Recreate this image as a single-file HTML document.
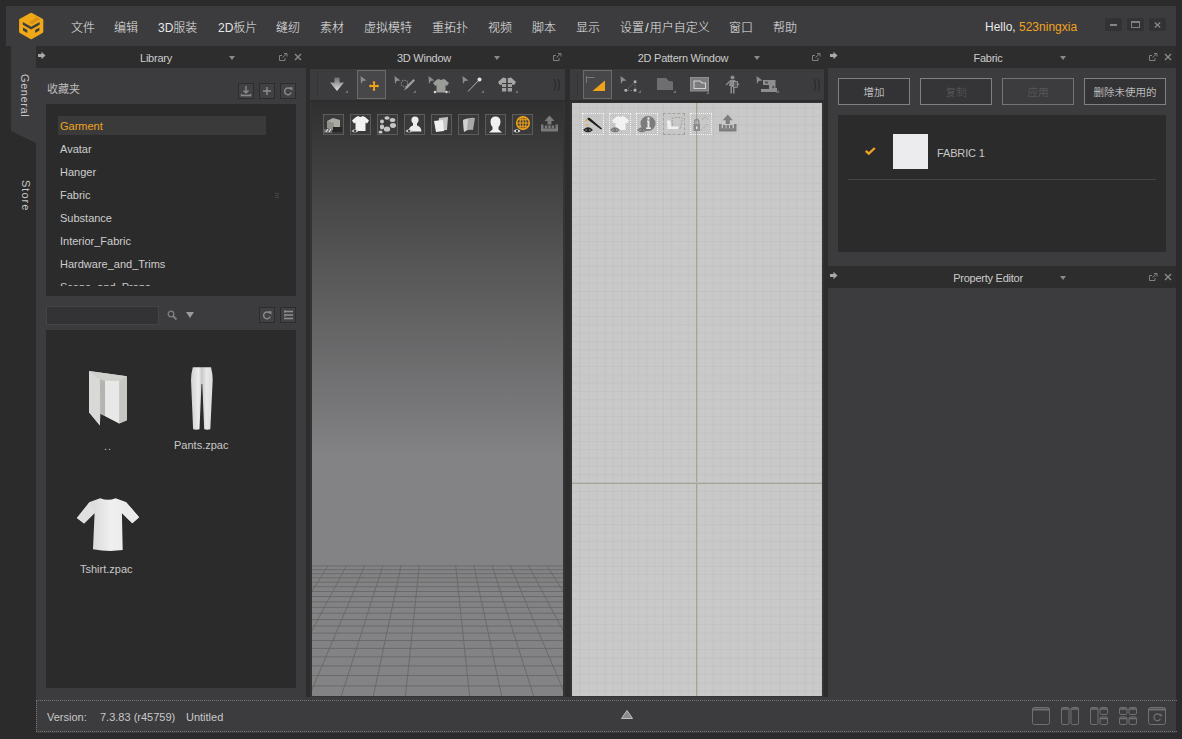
<!DOCTYPE html>
<html lang="zh-CN">
<head>
<meta charset="utf-8">
<title>CLO</title>
<style>
*{box-sizing:border-box;margin:0;padding:0}
html,body{width:1182px;height:739px;overflow:hidden;background:#2b2b2b}
body{position:relative;font-family:"Liberation Sans","Noto Sans CJK SC",sans-serif;font-size:11px;color:#d0d0d0;-webkit-font-smoothing:antialiased}
.abs{position:absolute}
#menubar{left:6px;top:6px;width:1170px;height:40px;background:#3c3c3e}
.mi{position:absolute;top:21px;font-weight:300;height:14px;line-height:14px;font-size:12px;color:#e8e8e8;white-space:nowrap}
.titlebar{position:absolute;height:22px;background:#2d2d2d;color:#d4d4d4;font-size:11px;line-height:22px;text-align:center}
.panel{position:absolute;background:#3c3c3e}
.dark{background:#2b2b2b}
.tri{position:absolute;width:0;height:0;border-left:3px solid transparent;border-right:3px solid transparent;border-top:4px solid #8a8a8a}
.sbtn{position:absolute;width:16px;height:16px;border:1px solid #2c2c2c;background:#414143}
.li{position:absolute;left:60px;height:14px;line-height:14px;font-size:11px;color:#cdcdcd;white-space:nowrap}
.fbtn{position:absolute;top:78px;height:27px;border:1px solid #808080;background:#333335;color:#e4e4e4;font-size:10.5px;font-weight:300;line-height:27px;text-align:center;white-space:nowrap}
.fbtn.dis{background:#3c3c3e;color:#636363;border-color:#747474}
.vtab{position:absolute;transform:rotate(90deg);transform-origin:left top;font-size:11px;letter-spacing:1px;color:#c8c8c8;white-space:nowrap;line-height:12px}
</style>
</head>
<body>
<!-- menu bar -->
<div id="menubar" class="abs"></div>
<svg class="abs" style="left:18px;top:12px" width="27" height="28" viewBox="0 0 27 28">
  <polygon points="13.2,2.300 23.700,8.200 23.700,19.700 13.200,25.600 2.700,19.700 2.700,8.200" fill="#f0a916" stroke="#f0a916" stroke-width="3.200" stroke-linejoin="round"/>
  <polygon points="16,3.500 22.500,7.300 14,12.300 10.500,10.300 18,6" fill="#d9921b"/>
  <polygon points="4.800,10 13.200,14.800 21.600,10 21.600,12.800 13.200,17.600 4.800,12.800" fill="#3c3c3e"/>
  <polygon points="5,15.600 9.300,18 9.300,21 5,18.600" fill="#3c3c3e"/>
  <polygon points="21.400,15.600 17.100,18 17.100,21 21.400,18.600" fill="#3c3c3e"/>
</svg>
<div class="mi" style="left:71px">文件</div>
<div class="mi" style="left:114px">编辑</div>
<div class="mi" style="left:158px">3D服装</div>
<div class="mi" style="left:218px">2D板片</div>
<div class="mi" style="left:276px">缝纫</div>
<div class="mi" style="left:320px">素材</div>
<div class="mi" style="left:364px">虚拟模特</div>
<div class="mi" style="left:432px">重拓扑</div>
<div class="mi" style="left:488px">视频</div>
<div class="mi" style="left:532px">脚本</div>
<div class="mi" style="left:576px">显示</div>
<div class="mi" style="left:620px">设置<span style="padding:0 1.2px">/</span>用户自定义</div>
<div class="mi" style="left:729px">窗口</div>
<div class="mi" style="left:773px">帮助</div>
<div class="mi" style="left:985px;top:20px">Hello, <span style="color:#f0a321">523ningxia</span></div>

<!-- SECTION: window buttons -->
<div class="abs" style="left:1105px;top:18px;width:17px;height:13px;background:#323234;border-radius:2px"><div class="abs" style="left:5px;top:6px;width:7px;height:2px;background:#848484"></div></div>
<div class="abs" style="left:1127px;top:18px;width:17px;height:13px;background:#323234;border-radius:2px"><div class="abs" style="left:4px;top:3px;width:9px;height:7px;border:1px solid #808080;border-top-width:2px"></div></div>
<div class="abs" style="left:1149px;top:18px;width:17px;height:13px;background:#323234;border-radius:2px"><svg class="abs" style="left:5px;top:4px" width="7" height="6" viewBox="0 0 7 6"><path d="M0.800 0.500L6.200 5.500M6.200 0.500L0.800 5.500" stroke="#8a8a8a" stroke-width="1.200"/></svg></div>

<!-- SECTION: left sidebar -->
<svg class="abs" style="left:0;top:46px" width="36" height="110" viewBox="0 0 36 110"><polygon points="11,0 36,0 36,97 11,85" fill="#3c3c3e"/></svg>
<div class="vtab" style="left:31px;top:74px;letter-spacing:0.6px">General</div>
<div class="vtab" style="left:32px;top:180px">Store</div>

<!-- SECTION: library -->
<div class="titlebar" style="left:36px;top:46px;width:1140px"></div>
<div class="panel" style="left:36px;top:68px;width:270px;height:629px"></div>
<div class="abs" style="left:36px;top:46px;width:270px;height:22px;line-height:24px;text-align:center;color:#cccccc;letter-spacing:-0.25px;padding-right:30px">Library</div>
<svg class="abs" style="left:38px;top:51px" width="9" height="9" viewBox="0 0 9 9"><path d="M0 3h3.5V0.8L7.5 4.5 3.5 8.2V6H0z" fill="#a8a8a8"/></svg>
<div class="tri" style="left:229px;top:56px"></div>
<svg class="abs" style="left:279px;top:53px" width="9" height="8" viewBox="0 0 9 8"><path d="M3 2.500H0.500v5h5.500V5M3.500 4.500L7.500 0.800M5 0.500h3v3" fill="none" stroke="#808080" stroke-width="1"/></svg>
<svg class="abs" style="left:294px;top:53px" width="8" height="8" viewBox="0 0 8 8"><path d="M1 1L7 7M7 1L1 7" stroke="#8a8a8a" stroke-width="1.4"/></svg>
<div class="abs" style="left:47px;top:82px;font-size:11px;line-height:14px;color:#bdbdbd">收藏夹</div>
<div class="sbtn" style="left:238px;top:83px"><svg width="14" height="14" viewBox="0 0 14 14"><path d="M7 2v6M4.500 6.500L7 9l2.500-2.500M2.500 10v1.500h9V10" fill="none" stroke="#8a8a8a" stroke-width="1.400"/></svg></div>
<div class="sbtn" style="left:259px;top:83px"><svg width="14" height="14" viewBox="0 0 14 14"><path d="M7 3v8M3 7h8" fill="none" stroke="#8e8e8e" stroke-width="1.400"/></svg></div>
<div class="sbtn" style="left:280px;top:83px"><svg width="14" height="14" viewBox="0 0 14 14"><path d="M9.800 5.400A3.400 3.400 0 1 0 10.200 8.600" fill="none" stroke="#8a8a8a" stroke-width="1.400"/><path d="M8 3.200h3.500v3.500z" fill="#8a8a8a"/></svg></div>
<div class="abs dark" style="left:46px;top:104px;width:250px;height:192px"></div>
<div class="abs" style="left:46px;top:104px;width:250px;height:182px;overflow:hidden">
  <div class="abs" style="left:12px;top:12px;width:208px;height:19px;background:#3a3a3a"></div>
  <div class="li" style="left:14px;top:15px;color:#f0a321">Garment</div>
  <div class="li" style="left:14px;top:38px">Avatar</div>
  <div class="li" style="left:14px;top:61px">Hanger</div>
  <div class="li" style="left:14px;top:84px">Fabric</div>
  <div class="li" style="left:14px;top:107px">Substance</div>
  <div class="li" style="left:14px;top:130px">Interior_Fabric</div>
  <div class="li" style="left:14px;top:153px">Hardware_and_Trims</div>
  <div class="li" style="left:14px;top:176px">Scene_and_Props</div>
  <div class="abs" style="left:229px;top:89px;width:4px;height:1px;background:#444;box-shadow:0 2px 0 #444,0 4px 0 #444"></div>
</div>
<div class="abs" style="left:46px;top:306px;width:113px;height:19px;background:#333335;border:1px solid #444"></div>
<svg class="abs" style="left:167px;top:310px" width="11" height="11" viewBox="0 0 11 11"><circle cx="4" cy="4" r="2.8" fill="none" stroke="#808080" stroke-width="1.3"/><path d="M6 6l3.5 3.5" stroke="#808080" stroke-width="1.8"/></svg>
<div class="tri" style="left:186px;top:312px;border-left-width:4px;border-right-width:4px;border-top-width:6px;border-top-color:#9a9a9a"></div>
<div class="sbtn" style="left:259px;top:307px"><svg width="14" height="14" viewBox="0 0 14 14"><path d="M9.800 5.400A3.400 3.400 0 1 0 10.200 8.600" fill="none" stroke="#8a8a8a" stroke-width="1.400"/><path d="M8 3.200h3.500v3.500z" fill="#8a8a8a"/></svg></div>
<div class="sbtn" style="left:280px;top:307px"><svg width="14" height="14" viewBox="0 0 14 14"><path d="M3 3.5h9M3 7h9M3 10.5h9" stroke="#8e8e8e" stroke-width="1.5"/><path d="M4 2v10" stroke="#8e8e8e" stroke-width="1" stroke-dasharray="1 1"/></svg></div>
<div class="abs dark" style="left:46px;top:330px;width:250px;height:358px"></div>
<!-- LIB-ITEMS -->
<svg class="abs" style="left:86px;top:368px" width="44" height="60" viewBox="86 368 44 60">
<polygon points="89,371 126.9,376.2 126.9,420.3 119.3,423.6 100.4,413.7 99.9,425.5 89,412.2" fill="#cacac6"/>
<polygon points="89,371 126.9,376.2 119.3,381 99.9,379.5" fill="#d0d0cc"/>
<polygon points="99.9,379.5 105.1,381 105.1,416 100.4,413.7" fill="#b4b4b0"/>
<polygon points="105.1,380.5 119.3,381 119.3,423.6 105.1,416" fill="#e8e8e8"/>
<polygon points="119.3,381 126.9,376.2 126.9,420.3 119.3,423.6" fill="#c6c6c2"/>
<polygon points="89,371 99.9,379.5 99.9,425.5 89,412.2" fill="#d9d9d7"/>
</svg>
<div class="abs" style="left:104px;top:439px;font-size:11px;line-height:14px;color:#c8c8c8;letter-spacing:1px">..</div>
<svg class="abs" style="left:189px;top:365px" width="26" height="67" viewBox="189 365 26 67">
<defs><linearGradient id="gp" x1="0" y1="0" x2="1" y2="0"><stop offset="0" stop-color="#d0d0d0"/><stop offset="0.35" stop-color="#ececec"/><stop offset="0.5" stop-color="#c8c8c8"/><stop offset="0.7" stop-color="#e8e8e8"/><stop offset="1" stop-color="#dcdcdc"/></linearGradient></defs>
<path d="M192.8,367.2 L211,367.2 Q212.8,374 212.7,380 L210.3,429.3 Q207.2,430.2 204.2,429.3 L202.3,384 L201.5,384 L199.5,429.3 Q196.300,430.200 193.100,429.300 L191,380 Q191,374 192.800,367.200z" fill="url(#gp)"/>
</svg>
<div class="abs" style="left:174px;top:438px;font-size:11px;line-height:14px;color:#c8c8c8;white-space:nowrap">Pants.zpac</div>
<svg class="abs" style="left:75px;top:496px" width="66" height="57" viewBox="75 496 66 57">
<defs><linearGradient id="gt" x1="0" y1="0" x2="1" y2="0"><stop offset="0" stop-color="#d6d6d6"/><stop offset="0.3" stop-color="#dedede"/><stop offset="0.55" stop-color="#f0f0f0"/><stop offset="1" stop-color="#e6e6e6"/></linearGradient></defs>
<path d="M100.2,498.2 Q108.200,501.500 115.500,498.200 L125.900,501.900 L139.100,517.200 L132.300,523.300 L121.900,513.100 L122.700,550.100 Q108,552 93,549.300 L94.600,513.100 L84.100,523.600 L76.900,518 L89.700,501.900z" fill="url(#gt)"/>
<path d="M89.700,501.900 L94.600,513.100 L84.100,523.600 L76.900,518z" fill="#e0e0e0"/>
<path d="M125.900,501.900 L139.100,517.200 L132.300,523.300 L121.900,513.100z" fill="#eaeaea"/>
</svg>
<div class="abs" style="left:80px;top:562px;font-size:11px;line-height:14px;color:#c8c8c8;white-space:nowrap">Tshirt.zpac</div>
<!-- /LIB-ITEMS -->

<!-- SECTION: 3d window -->
<div class="abs" style="left:306px;top:68px;width:4px;height:629px;background:#2d2d2d"></div>
<div class="abs" style="left:310px;top:46px;width:256px;height:22px;line-height:24px;text-align:center;color:#cccccc;letter-spacing:-0.25px;padding-right:28px">3D Window</div>
<div class="tri" style="left:494px;top:56px"></div>
<svg class="abs" style="left:553px;top:53px" width="9" height="8" viewBox="0 0 9 8"><path d="M3 2.500H0.500v5h5.500V5M3.500 4.500L7.500 0.800M5 0.500h3v3" fill="none" stroke="#808080" stroke-width="1"/></svg>
<div class="panel" style="left:310px;top:69px;width:255px;height:31px"></div>
<div class="abs" style="left:310px;top:100px;width:255px;height:598px;background:#343435"></div>
<div class="abs" id="vp3d" style="left:312px;top:102px;width:251px;height:594px;background:linear-gradient(to bottom,#303030 0px,#838385 356px,#838385 100%)"></div>
<div class="abs" style="left:310px;top:100px;width:255px;height:2px;background:#2d2d2d"></div>
<!-- 3D-CONTENT -->
<svg class="abs" style="left:312px;top:102px" width="251" height="594" viewBox="0 0 251 594"><g stroke="#686868" stroke-width="0.9" fill="none"><line x1="0" y1="463.91" x2="251" y2="463.91"/><line x1="0" y1="467.70" x2="251" y2="467.70"/><line x1="0" y1="471.67" x2="251" y2="471.67"/><line x1="0" y1="475.82" x2="251" y2="475.82"/><line x1="0" y1="480.16" x2="251" y2="480.16"/><line x1="0" y1="484.72" x2="251" y2="484.72"/><line x1="0" y1="489.50" x2="251" y2="489.50"/><line x1="0" y1="494.53" x2="251" y2="494.53"/><line x1="0" y1="499.83" x2="251" y2="499.83"/><line x1="0" y1="505.40" x2="251" y2="505.40"/><line x1="0" y1="511.29" x2="251" y2="511.29"/><line x1="0" y1="517.52" x2="251" y2="517.52"/><line x1="0" y1="524.11" x2="251" y2="524.11"/><line x1="0" y1="531.10" x2="251" y2="531.10"/><line x1="0" y1="538.52" x2="251" y2="538.52"/><line x1="0" y1="546.42" x2="251" y2="546.42"/><line x1="0" y1="554.85" x2="251" y2="554.85"/><line x1="0" y1="563.86" x2="251" y2="563.86"/><line x1="0" y1="573.50" x2="251" y2="573.50"/><line x1="0" y1="583.87" x2="251" y2="583.87"/><line x1="-1.90" y1="463.50" x2="-98.89" y2="594"/><line x1="16.30" y1="463.50" x2="-66.83" y2="594"/><line x1="34.50" y1="463.50" x2="-34.78" y2="594"/><line x1="52.70" y1="463.50" x2="-2.72" y2="594"/><line x1="70.90" y1="463.50" x2="29.33" y2="594"/><line x1="89.10" y1="463.50" x2="61.39" y2="594"/><line x1="107.30" y1="463.50" x2="93.44" y2="594"/><line x1="143.70" y1="463.50" x2="157.56" y2="594"/><line x1="161.90" y1="463.50" x2="189.61" y2="594"/><line x1="180.10" y1="463.50" x2="221.67" y2="594"/><line x1="198.30" y1="463.50" x2="253.72" y2="594"/><line x1="216.50" y1="463.50" x2="285.78" y2="594"/><line x1="234.70" y1="463.50" x2="317.83" y2="594"/><line x1="252.90" y1="463.50" x2="349.89" y2="594"/></g></svg>
<div class="abs" style="left:317px;top:74px;width:1px;height:21px;background:repeating-linear-gradient(to bottom,#2a2a2a 0,#2a2a2a 1px,transparent 1px,transparent 2px)"></div>
<svg class="abs" style="left:329px;top:77px" width="16" height="15" viewBox="0 0 16 15"><defs><linearGradient id="ga" x1="0" y1="0" x2="0" y2="1"><stop offset="0" stop-color="#6e6e6e"/><stop offset="1" stop-color="#e0e0e0"/></linearGradient></defs><path d="M5.5 0.5h5v5h4.5L8 14 1 5.5h4.5z" fill="url(#ga)"/></svg>
<svg class="abs" style="left:345px;top:90px" width="3" height="3" viewBox="0 0 3 3"><path d="M3 0V3H0z" fill="#707070"/></svg>
<div class="abs" style="left:357px;top:70px;width:29px;height:29px;background:#474749;border:1px solid #6b6b6b"></div>
<svg class="abs" style="left:360px;top:76px" width="7" height="8" viewBox="0 0 7 8"><path d="M0.5 0L6.5 4.5 2.8 5 1 8z" fill="#8c8c8c"/></svg>
<svg class="abs" style="left:369px;top:81px" width="10" height="10" viewBox="0 0 12 12"><path d="M6 0.5v11M0.5 6h11" stroke="#f0a31a" stroke-width="2.2"/><path d="M6 0l2 2.4H4zM6 12l2-2.4H4zM0 6l2.4-2v4zM12 6l-2.4-2v4z" fill="#f0a31a"/></svg>
<svg class="abs" style="left:394px;top:76px" width="7" height="8" viewBox="0 0 7 8"><path d="M0.5 0L6.5 4.5 2.8 5 1 8z" fill="#8c8c8c"/></svg>
<svg class="abs" style="left:399px;top:77px" width="17" height="16" viewBox="0 0 17 16"><circle cx="5.5" cy="6.5" r="3.3" fill="none" stroke="#8a8a8a" stroke-width="1.1" stroke-dasharray="1.5 1"/><path d="M5 13.5L7 9.5 14.5 2 16 3.5 8.8 11z" fill="#a0a0a0"/></svg>
<svg class="abs" style="left:413px;top:90px" width="3" height="3" viewBox="0 0 3 3"><path d="M3 0V3H0z" fill="#707070"/></svg>
<svg class="abs" style="left:428px;top:76px" width="7" height="8" viewBox="0 0 7 8"><path d="M0.5 0L6.5 4.5 2.8 5 1 8z" fill="#8c8c8c"/></svg>
<svg class="abs" style="left:432px;top:78px" width="18" height="16" viewBox="0 0 18 16"><path d="M5 1.5L7 1Q9 3 11 1L13 1.5 17 5 14.8 8 13.5 7V14.5H4.5V7L3.2 8 1 5z" fill="#9a9c98"/><circle cx="3" cy="14" r="1.3" fill="#d8d8d8"/><circle cx="14.5" cy="14" r="1.3" fill="#d8d8d8"/></svg>
<svg class="abs" style="left:447px;top:90px" width="3" height="3" viewBox="0 0 3 3"><path d="M3 0V3H0z" fill="#707070"/></svg>
<svg class="abs" style="left:462px;top:76px" width="7" height="8" viewBox="0 0 7 8"><path d="M0.5 0L6.5 4.5 2.8 5 1 8z" fill="#8c8c8c"/></svg>
<svg class="abs" style="left:466px;top:76px" width="17" height="17" viewBox="0 0 17 17"><path d="M2 15.5L13 4" stroke="#b0b0b0" stroke-width="1"/><circle cx="13.5" cy="3.5" r="2" fill="#e4e4e4"/></svg>
<svg class="abs" style="left:481px;top:90px" width="3" height="3" viewBox="0 0 3 3"><path d="M3 0V3H0z" fill="#707070"/></svg>
<svg class="abs" style="left:497px;top:77px" width="20" height="15" viewBox="0 0 20 15"><path d="M1 5L6 0.5 9.2 1.2V6H5V7.5L2.8 8z" fill="#a6a6a6"/><path d="M19 5L14 0.5 10.8 1.2V6H15V7.5L17.2 8z" fill="#a6a6a6"/><path d="M5 7h4.2v3H5zM10.8 7H15v3h-4.2zM5 11h4.2v3.5H5zM10.8 11H15v3.5h-4.2z" fill="#a0a0a0"/></svg>
<svg class="abs" style="left:515px;top:90px" width="3" height="3" viewBox="0 0 3 3"><path d="M3 0V3H0z" fill="#707070"/></svg>
<svg class="abs" style="left:553px;top:78px" width="9" height="14" viewBox="0 0 9 14"><path d="M1 1Q4 7 1 13M5 1Q8 7 5 13" fill="none" stroke="#2c2c2c" stroke-width="1.3"/></svg>
<div class="abs" style="left:323px;top:114px;width:21px;height:21px;border:1px solid #5c5c5c;background:#3a3a3a"><svg width="19" height="19" viewBox="0 0 19 19" style="display:block"><path d="M3 6L9 3 16 5V12L10 15 3 13z" fill="#a8aaa4"/><path d="M3 6L10 8V15L3 13z" fill="#8e908a"/><path d="M9 12h9v5H9z" fill="#262626"/><path d="M0 14h8v4H0z" fill="#6a6a6a"/><path d="M2 17l2-3M5 17l2-3" stroke="#ddd" stroke-width="1.2"/></svg></div>
<div class="abs" style="left:350px;top:114px;width:21px;height:21px;border:1px solid #5c5c5c;background:#3a3a3a"><svg width="19" height="19" viewBox="0 0 19 19" style="display:block"><path d="M5 2L7.5 1Q9.5 3 11.5 1L14 2 18 5.5 16 8.5 14.5 7.5V16H4.5V7.5L3 8.5 1 5.5z" fill="#f2f2f2"/><path d="M0.5 16Q4 12.5 7.5 16Q4 19 0.5 16z" fill="#c8c8c8"/><circle cx="4" cy="16" r="1.2" fill="#444"/></svg></div>
<div class="abs" style="left:377px;top:114px;width:21px;height:21px;border:1px solid #5c5c5c;background:#3a3a3a"><svg width="19" height="19" viewBox="0 0 19 19" style="display:block"><g fill="#c6c6c6"><ellipse cx="9" cy="3" rx="2.6" ry="1.8"/><ellipse cx="14.5" cy="5" rx="2.8" ry="2"/><ellipse cx="15" cy="10.5" rx="3" ry="2.4"/><ellipse cx="9" cy="14" rx="3.2" ry="2.6"/><ellipse cx="4" cy="12" rx="2.2" ry="2.4"/><ellipse cx="4" cy="6.5" rx="2" ry="2"/><ellipse cx="2.5" cy="17" rx="2" ry="1.6"/></g></svg></div>
<div class="abs" style="left:404px;top:114px;width:21px;height:21px;border:1px solid #5c5c5c;background:#3a3a3a"><svg width="19" height="19" viewBox="0 0 19 19" style="display:block"><circle cx="10" cy="5" r="3.6" fill="#ececec"/><path d="M8 8h4v2.5Q16 11.5 16.5 16.5H3.5Q4 11.500 8 10.500z" fill="#ececec"/><path d="M0.5 16Q4 12.5 7.5 16Q4 19 0.5 16z" fill="#c8c8c8"/><circle cx="4" cy="16" r="1.2" fill="#444"/></svg></div>
<div class="abs" style="left:431px;top:114px;width:21px;height:21px;border:1px solid #5c5c5c;background:#3a3a3a"><svg width="19" height="19" viewBox="0 0 19 19" style="display:block"><path d="M7 3L16 2 15 15 5 16z" fill="#c4c4c4"/><path d="M2 6L11 5 12 16 4 17z" fill="#f0f0f0"/></svg></div>
<div class="abs" style="left:458px;top:114px;width:21px;height:21px;border:1px solid #5c5c5c;background:#3a3a3a"><svg width="19" height="19" viewBox="0 0 19 19" style="display:block"><path d="M4 5Q10 2 16 3L14 15Q9 14 5 17z" fill="#a8a8a8"/><path d="M4 5Q7 4 9 4L8 15Q6 16 5 17z" fill="#d0d0d0"/></svg></div>
<div class="abs" style="left:485px;top:114px;width:21px;height:21px;border:1px solid #5c5c5c;background:#3a3a3a"><svg width="19" height="19" viewBox="0 0 19 19" style="display:block"><path d="M9.500 1.500Q14.500 1.500 14.500 7Q14.500 10 12.500 12V14.500L16 17.500H3L6.500 14.500V12Q4.500 10 4.500 7Q4.500 1.500 9.500 1.500z" fill="#f0f0f0"/></svg></div>
<div class="abs" style="left:512px;top:114px;width:21px;height:21px;border:1px solid #5c5c5c;background:#3a3a3a"><svg width="19" height="19" viewBox="0 0 19 19" style="display:block"><circle cx="10" cy="8" r="6.300" fill="none" stroke="#f0a31a" stroke-width="1.500"/><path d="M10 1.700v12.600M3.700 8h12.600M4.800 4.700h10.400M4.800 11.300h10.400" stroke="#f0a31a" stroke-width="1.100" fill="none"/><ellipse cx="10" cy="8" rx="3" ry="6.300" fill="none" stroke="#f0a31a" stroke-width="1.100"/><path d="M0.500 16Q4 12.500 7.500 16Q4 19 0.500 16z" fill="#e8e8e8"/><circle cx="4" cy="16" r="1.2" fill="#333"/></svg></div>
<svg class="abs" style="left:540px;top:115px" width="19" height="17" viewBox="0 0 19 17" preserveAspectRatio="none"><path d="M9.500 0.500L14.500 6H11.500V9.500H7.500V6H4.500z" fill="#7a7a7a"/><path d="M1 9.500h2.500v4h12v-4H18v7H1z" fill="#7a7a7a"/><path d="M4.800 10.500h2.500v3H4.800zM8.250 10.500h2.500v3H8.250zM11.700 10.500h2.500v3H11.700z" fill="#7a7a7a"/></svg>
<!-- /3D-CONTENT -->

<!-- SECTION: 2d window -->
<div class="abs" style="left:565px;top:68px;width:5px;height:629px;background:#2d2d2d"></div>
<div class="abs" style="left:570px;top:46px;width:254px;height:22px;line-height:24px;text-align:center;color:#cccccc;letter-spacing:-0.25px;padding-right:28px">2D Pattern Window</div>
<div class="tri" style="left:754px;top:56px"></div>
<svg class="abs" style="left:812px;top:53px" width="9" height="8" viewBox="0 0 9 8"><path d="M3 2.500H0.500v5h5.500V5M3.500 4.500L7.500 0.800M5 0.500h3v3" fill="none" stroke="#808080" stroke-width="1"/></svg>
<div class="panel" style="left:570px;top:69px;width:254px;height:31px"></div>
<div class="abs" style="left:570px;top:100px;width:254px;height:598px;background:#343435"></div>
<div class="abs" id="vp2d" style="left:572px;top:103px;width:250px;height:593px;background-color:#c9c9c9;background-image:linear-gradient(to right,#c2c2c2 1px,transparent 1px),linear-gradient(to bottom,#c2c2c2 1px,transparent 1px);background-size:8.333px 8.333px;background-position:7.6px 4.8px"></div>
<div class="abs" style="left:570px;top:100px;width:254px;height:2px;background:#2d2d2d"></div>
<!-- 2D-CONTENT -->
<div class="abs" style="left:696px;top:103px;width:1px;height:593px;background:#a2a498;box-shadow:1px 0 0 #bcbdb6"></div>
<div class="abs" style="left:572px;top:482px;width:250px;height:1px;background:#bcbdb6;box-shadow:0 1px 0 #a2a498"></div>
<div class="abs" style="left:577px;top:74px;width:1px;height:21px;background:repeating-linear-gradient(to bottom,#2a2a2a 0,#2a2a2a 1px,transparent 1px,transparent 2px)"></div>
<div class="abs" style="left:583px;top:70px;width:29px;height:29px;background:#474749;border:1px solid #6b6b6b"></div>
<svg class="abs" style="left:586px;top:76px" width="9" height="7" viewBox="0 0 9 7"><path d="M0.500 0v7M0.500 1.500h8" stroke="#7a7a7a" stroke-width="1" fill="none"/></svg>
<svg class="abs" style="left:592px;top:80px" width="14" height="12" viewBox="0 0 14 12"><path d="M13 0.500V11H0.500z" fill="#f0a31a"/></svg>
<svg class="abs" style="left:620px;top:76px" width="7" height="8" viewBox="0 0 7 8"><path d="M0.5 0L6.5 4.5 2.8 5 1 8z" fill="#8c8c8c"/></svg>
<svg class="abs" style="left:624px;top:80px" width="14" height="12" viewBox="0 0 14 12"><path d="M2 10.500L11 2V10.500z" fill="none" stroke="#8a8a8a" stroke-width="0.9" stroke-dasharray="1.500 1.500"/><rect x="0.500" y="9" width="2.600" height="2.600" fill="#b4b4b4"/><rect x="9.800" y="0.500" width="2.600" height="2.600" fill="#b4b4b4"/><rect x="9.800" y="9" width="2.600" height="2.600" fill="#b4b4b4"/></svg>
<svg class="abs" style="left:638px;top:90px" width="3" height="3" viewBox="0 0 3 3"><path d="M3 0V3H0z" fill="#707070"/></svg>
<svg class="abs" style="left:656px;top:77px" width="18" height="14" viewBox="0 0 18 14"><path d="M1 1h9l3 3 4 0.500V13H1z" fill="#6e6e70"/></svg>
<svg class="abs" style="left:673px;top:90px" width="3" height="3" viewBox="0 0 3 3"><path d="M3 0V3H0z" fill="#707070"/></svg>
<svg class="abs" style="left:690px;top:77px" width="19" height="15" viewBox="0 0 19 15"><rect x="0.500" y="0.500" width="18" height="13.500" fill="#7c7c7e" stroke="#8e8e90"/><path d="M4 4h6l2 2h3.500v5.500H4z" fill="none" stroke="#d0d0d0" stroke-width="1.100"/></svg>
<svg class="abs" style="left:706px;top:91px" width="3" height="3" viewBox="0 0 3 3"><path d="M3 0V3H0z" fill="#707070"/></svg>
<svg class="abs" style="left:725px;top:75px" width="16" height="19" viewBox="0 0 16 19"><circle cx="7.500" cy="2.500" r="2" fill="#8c8c8c"/><path d="M5 5h5l1 6h-1.500v7.500H8V12H7v6.500H5.500V11H4z" fill="#8c8c8c"/><path d="M5 6L1 10M10 6l4 4" stroke="#8c8c8c" stroke-width="1.300"/><rect x="8.500" y="6.500" width="4" height="6" fill="#5c5c5c" stroke="#a8a8a8" stroke-width="0.600"/></svg>
<svg class="abs" style="left:756px;top:76px" width="7" height="8" viewBox="0 0 7 8"><path d="M0.5 0L6.5 4.5 2.8 5 1 8z" fill="#8c8c8c"/></svg>
<svg class="abs" style="left:760px;top:78px" width="18" height="15" viewBox="0 0 18 15"><path d="M3 2h12.500v8H17v4H1v-3h8V7H3z" fill="#8e8e8e"/><rect x="5" y="3.500" width="3" height="2" fill="#555"/><circle cx="13.300" cy="9" r="1.200" fill="#555"/></svg>
<svg class="abs" style="left:776px;top:90px" width="3" height="3" viewBox="0 0 3 3"><path d="M3 0V3H0z" fill="#707070"/></svg>
<svg class="abs" style="left:813px;top:78px" width="9" height="14" viewBox="0 0 9 14"><path d="M1 1Q4 7 1 13M5 1Q8 7 5 13" fill="none" stroke="#2c2c2c" stroke-width="1.3"/></svg>
<div class="abs" style="left:582px;top:113px;width:22px;height:22px;border:1px dotted #f4f4f4;background:transparent"><svg width="20" height="20" viewBox="0 0 20 20" style="display:block"><path d="M4.500 4Q6 3 8 5L19 14.500 18 15.500 6 6.500Q4 5.500 4.500 4z" fill="#1c1c1c"/><path d="M2.500 7l1.500-1.500M3 11.500l1.500-1" stroke="#f0a31a" stroke-width="1.300"/><path d="M1 16Q5 12 9 16Q5 19.500 1 16z" fill="none" stroke="#222" stroke-width="1.200"/><circle cx="5" cy="16" r="1.700" fill="#222"/></svg></div>
<div class="abs" style="left:609px;top:113px;width:22px;height:22px;border:1px dotted #f4f4f4;background:transparent"><svg width="20" height="20" viewBox="0 0 20 20" style="display:block"><path d="M6 3L8.500 2Q10.500 4 12.500 2L15 3 19 6.500 17 9.500 15.500 8.500V16H5.500V8.500L4 9.500 2 6.500z" fill="#f2f2f2"/><path d="M1 16Q5 12 9 16Q5 19.500 1 16z" fill="none" stroke="#777" stroke-width="1.200"/><circle cx="5" cy="16" r="1.700" fill="#777"/></svg></div>
<div class="abs" style="left:636px;top:113px;width:22px;height:22px;border:1px dotted #f4f4f4;background:transparent"><svg width="20" height="20" viewBox="0 0 20 20" style="display:block"><circle cx="11" cy="9.500" r="7.500" fill="#7c7c7c"/><path d="M10 6.500h2.500v7H14v1.500H9V13.500h1.500V8H10z" fill="#e8e8e8"/><circle cx="11.500" cy="4.500" r="1.200" fill="#e8e8e8"/><path d="M1 16Q5 12 9 16Q5 19.500 1 16z" fill="none" stroke="#777" stroke-width="1.200"/><circle cx="5" cy="16" r="1.700" fill="#777"/></svg></div>
<div class="abs" style="left:663px;top:113px;width:22px;height:22px;border:1px dashed #a4a49c;background:transparent"><svg width="20" height="20" viewBox="0 0 20 20" style="display:block"><path d="M8 4.500Q12 3 18.500 4L16.500 14.500H9z" fill="none" stroke="#a0a09a" stroke-width="1" stroke-dasharray="2 1.200"/><path d="M3 6.500h3.500L7 12.500 14.500 12.500V15H3.500z" fill="#f0f0f0"/></svg></div>
<div class="abs" style="left:690px;top:113px;width:22px;height:22px;border:1px dotted #f4f4f4;background:transparent"><svg width="20" height="20" viewBox="0 0 20 20" style="display:block"><rect x="2.500" y="10" width="6.500" height="7" fill="#8a8a8a"/><path d="M3.800 10V7.500Q3.800 5.500 5.800 5.500Q7.800 5.500 7.800 7.500V10" fill="none" stroke="#8a8a8a" stroke-width="1.300"/><rect x="5" y="12.500" width="1.600" height="2.500" fill="#e0e0e0"/><path d="M10 16.500L17 9.500M11 5.500L14 3 17 5.500" fill="none" stroke="#b0b0b0" stroke-width="1.200" stroke-dasharray="2 1.500"/></svg></div>
<svg class="abs" style="left:718px;top:114px" width="19.5" height="18" viewBox="0 0 19 17" preserveAspectRatio="none"><path d="M9.500 0.500L14.500 6H11.500V9.500H7.500V6H4.500z" fill="#7e7e7e"/><path d="M1 9.500h2.500v4h12v-4H18v7H1z" fill="#7e7e7e"/><path d="M4.800 10.500h2.500v3H4.800zM8.250 10.500h2.500v3H8.250zM11.700 10.500h2.500v3H11.700z" fill="#7e7e7e"/></svg>
<!-- /2D-CONTENT -->

<!-- SECTION: fabric -->
<div class="abs" style="left:824px;top:68px;width:4px;height:629px;background:#2d2d2d"></div>
<div class="panel" style="left:828px;top:68px;width:348px;height:198px"></div>
<div class="abs" style="left:828px;top:46px;width:348px;height:22px;line-height:24px;text-align:center;color:#cccccc;letter-spacing:-0.25px;padding-right:28px">Fabric</div>
<svg class="abs" style="left:830px;top:51px" width="9" height="9" viewBox="0 0 9 9"><path d="M0 3h3.5V0.8L7.5 4.5 3.5 8.2V6H0z" fill="#a8a8a8"/></svg>
<div class="tri" style="left:1060px;top:56px"></div>
<svg class="abs" style="left:1149px;top:53px" width="9" height="8" viewBox="0 0 9 8"><path d="M3 2.500H0.500v5h5.500V5M3.500 4.500L7.500 0.800M5 0.500h3v3" fill="none" stroke="#808080" stroke-width="1"/></svg>
<svg class="abs" style="left:1164px;top:53px" width="8" height="8" viewBox="0 0 8 8"><path d="M1 1L7 7M7 1L1 7" stroke="#8a8a8a" stroke-width="1.4"/></svg>
<div class="fbtn" style="left:838px;width:72px">增加</div>
<div class="fbtn dis" style="left:920px;width:72px;background:#353537;color:#5c5c5c;border-color:#808080">复制</div>
<div class="fbtn dis" style="left:1002px;width:72px">应用</div>
<div class="fbtn" style="left:1084px;width:82px">删除未使用的</div>
<div class="abs dark" style="left:838px;top:115px;width:328px;height:137px"></div>
<svg class="abs" style="left:864px;top:146px" width="13" height="10" viewBox="0 0 13 10"><path d="M1.800 4.800L4.800 7.600 10.800 2" fill="none" stroke="#f0a321" stroke-width="2.300"/></svg>
<div class="abs" style="left:893px;top:134px;width:35px;height:35px;background:#ececee"></div>
<div class="abs" style="left:937px;top:146px;font-size:11px;line-height:14px;color:#c6c6c6;letter-spacing:-0.15px">FABRIC 1</div>
<div class="abs" style="left:848px;top:179px;width:308px;height:1px;background:#454547"></div>

<!-- SECTION: property editor -->
<div class="abs" style="left:828px;top:266px;width:348px;height:22px;background:#2d2d2d"></div>
<div class="abs" style="left:828px;top:266px;width:348px;height:22px;line-height:24px;text-align:center;color:#cccccc;letter-spacing:-0.25px;padding-right:28px">Property Editor</div>
<svg class="abs" style="left:830px;top:271px" width="9" height="9" viewBox="0 0 9 9"><path d="M0 3h3.5V0.8L7.5 4.5 3.5 8.2V6H0z" fill="#a8a8a8"/></svg>
<div class="tri" style="left:1060px;top:276px"></div>
<svg class="abs" style="left:1149px;top:273px" width="9" height="8" viewBox="0 0 9 8"><path d="M3 2.500H0.500v5h5.500V5M3.500 4.500L7.500 0.800M5 0.500h3v3" fill="none" stroke="#808080" stroke-width="1"/></svg>
<svg class="abs" style="left:1164px;top:273px" width="8" height="8" viewBox="0 0 8 8"><path d="M1 1L7 7M7 1L1 7" stroke="#8a8a8a" stroke-width="1.4"/></svg>
<div class="panel" style="left:828px;top:288px;width:348px;height:410px"></div>

<!-- SECTION: status bar -->
<div class="panel" style="left:36px;top:697px;width:1140px;height:36px"></div>
<div class="abs" style="left:36px;top:700px;width:1141px;height:32px;border:1px dotted #77777a;border-right:none"></div>
<div class="abs" style="left:47px;top:710px;font-size:11px;line-height:14px;color:#c8c8c8;white-space:pre">Version:</div>
<div class="abs" style="left:100px;top:710px;font-size:11px;line-height:14px;color:#c8c8c8;white-space:pre">7.3.83 (r45759)</div>
<div class="abs" style="left:186px;top:710px;font-size:11px;line-height:14px;color:#c8c8c8;white-space:pre">Untitled</div>
<svg class="abs" style="left:620px;top:709px" width="14" height="12" viewBox="0 0 14 12"><path d="M7 1.5L12.5 9.5H1.5z" fill="#8a8a8a" stroke="#c0c0c0" stroke-width="1"/></svg>
<!-- STATUS-ICONS -->
<svg class="abs" style="left:1032px;top:707px" width="18" height="18" viewBox="0 0 18 18"><g fill="none" stroke="#707072" stroke-width="1"><rect x="0.5" y="0.5" width="17" height="17" rx="2"/><path d="M0.5 2.5h17" stroke-width="2"/></g></svg>
<svg class="abs" style="left:1061px;top:707px" width="18" height="18" viewBox="0 0 18 18"><g fill="none" stroke="#707072" stroke-width="1"><rect x="0.5" y="0.5" width="7.5" height="17" rx="1.5"/><rect x="10" y="0.5" width="7.5" height="17" rx="1.5"/><path d="M0.5 2h7.500M10 2h7.500" stroke-width="1.600"/></g></svg>
<svg class="abs" style="left:1090px;top:707px" width="18" height="18" viewBox="0 0 18 18"><g fill="none" stroke="#707072" stroke-width="1"><rect x="0.5" y="0.5" width="7.5" height="17" rx="1.5"/><rect x="10" y="0.5" width="7.5" height="7" rx="1.500"/><rect x="10" y="10" width="7.500" height="7.500" rx="1.500"/><path d="M0.500 2h7.500M10 2h7.500M10 11.500h7.500" stroke-width="1.600"/></g></svg>
<svg class="abs" style="left:1119px;top:707px" width="18" height="18" viewBox="0 0 18 18"><g fill="none" stroke="#707072" stroke-width="1"><rect x="0.5" y="0.5" width="7.5" height="7" rx="1.5"/><rect x="10" y="0.5" width="7.5" height="7" rx="1.500"/><rect x="0.500" y="10" width="7.500" height="7.500" rx="1.500"/><rect x="10" y="10" width="7.500" height="7.500" rx="1.500"/><path d="M0.500 2h7.500M10 2h7.500M0.500 11.500h7.500M10 11.500h7.500" stroke-width="1.600"/></g></svg>
<svg class="abs" style="left:1148px;top:707px" width="18" height="18" viewBox="0 0 18 18"><g fill="none" stroke="#707072" stroke-width="1"><rect x="0.5" y="0.5" width="17" height="17" rx="2"/><path d="M0.500 2.500h17" stroke-width="2"/><path d="M12.200 8.500A3.400 3.400 0 1 0 12.400 11.800" stroke-width="1.300"/><path d="M10.500 7h3.200v3.200z" fill="#707072" stroke="none"/></g></svg>
<!-- /STATUS-ICONS -->

</body>
</html>
